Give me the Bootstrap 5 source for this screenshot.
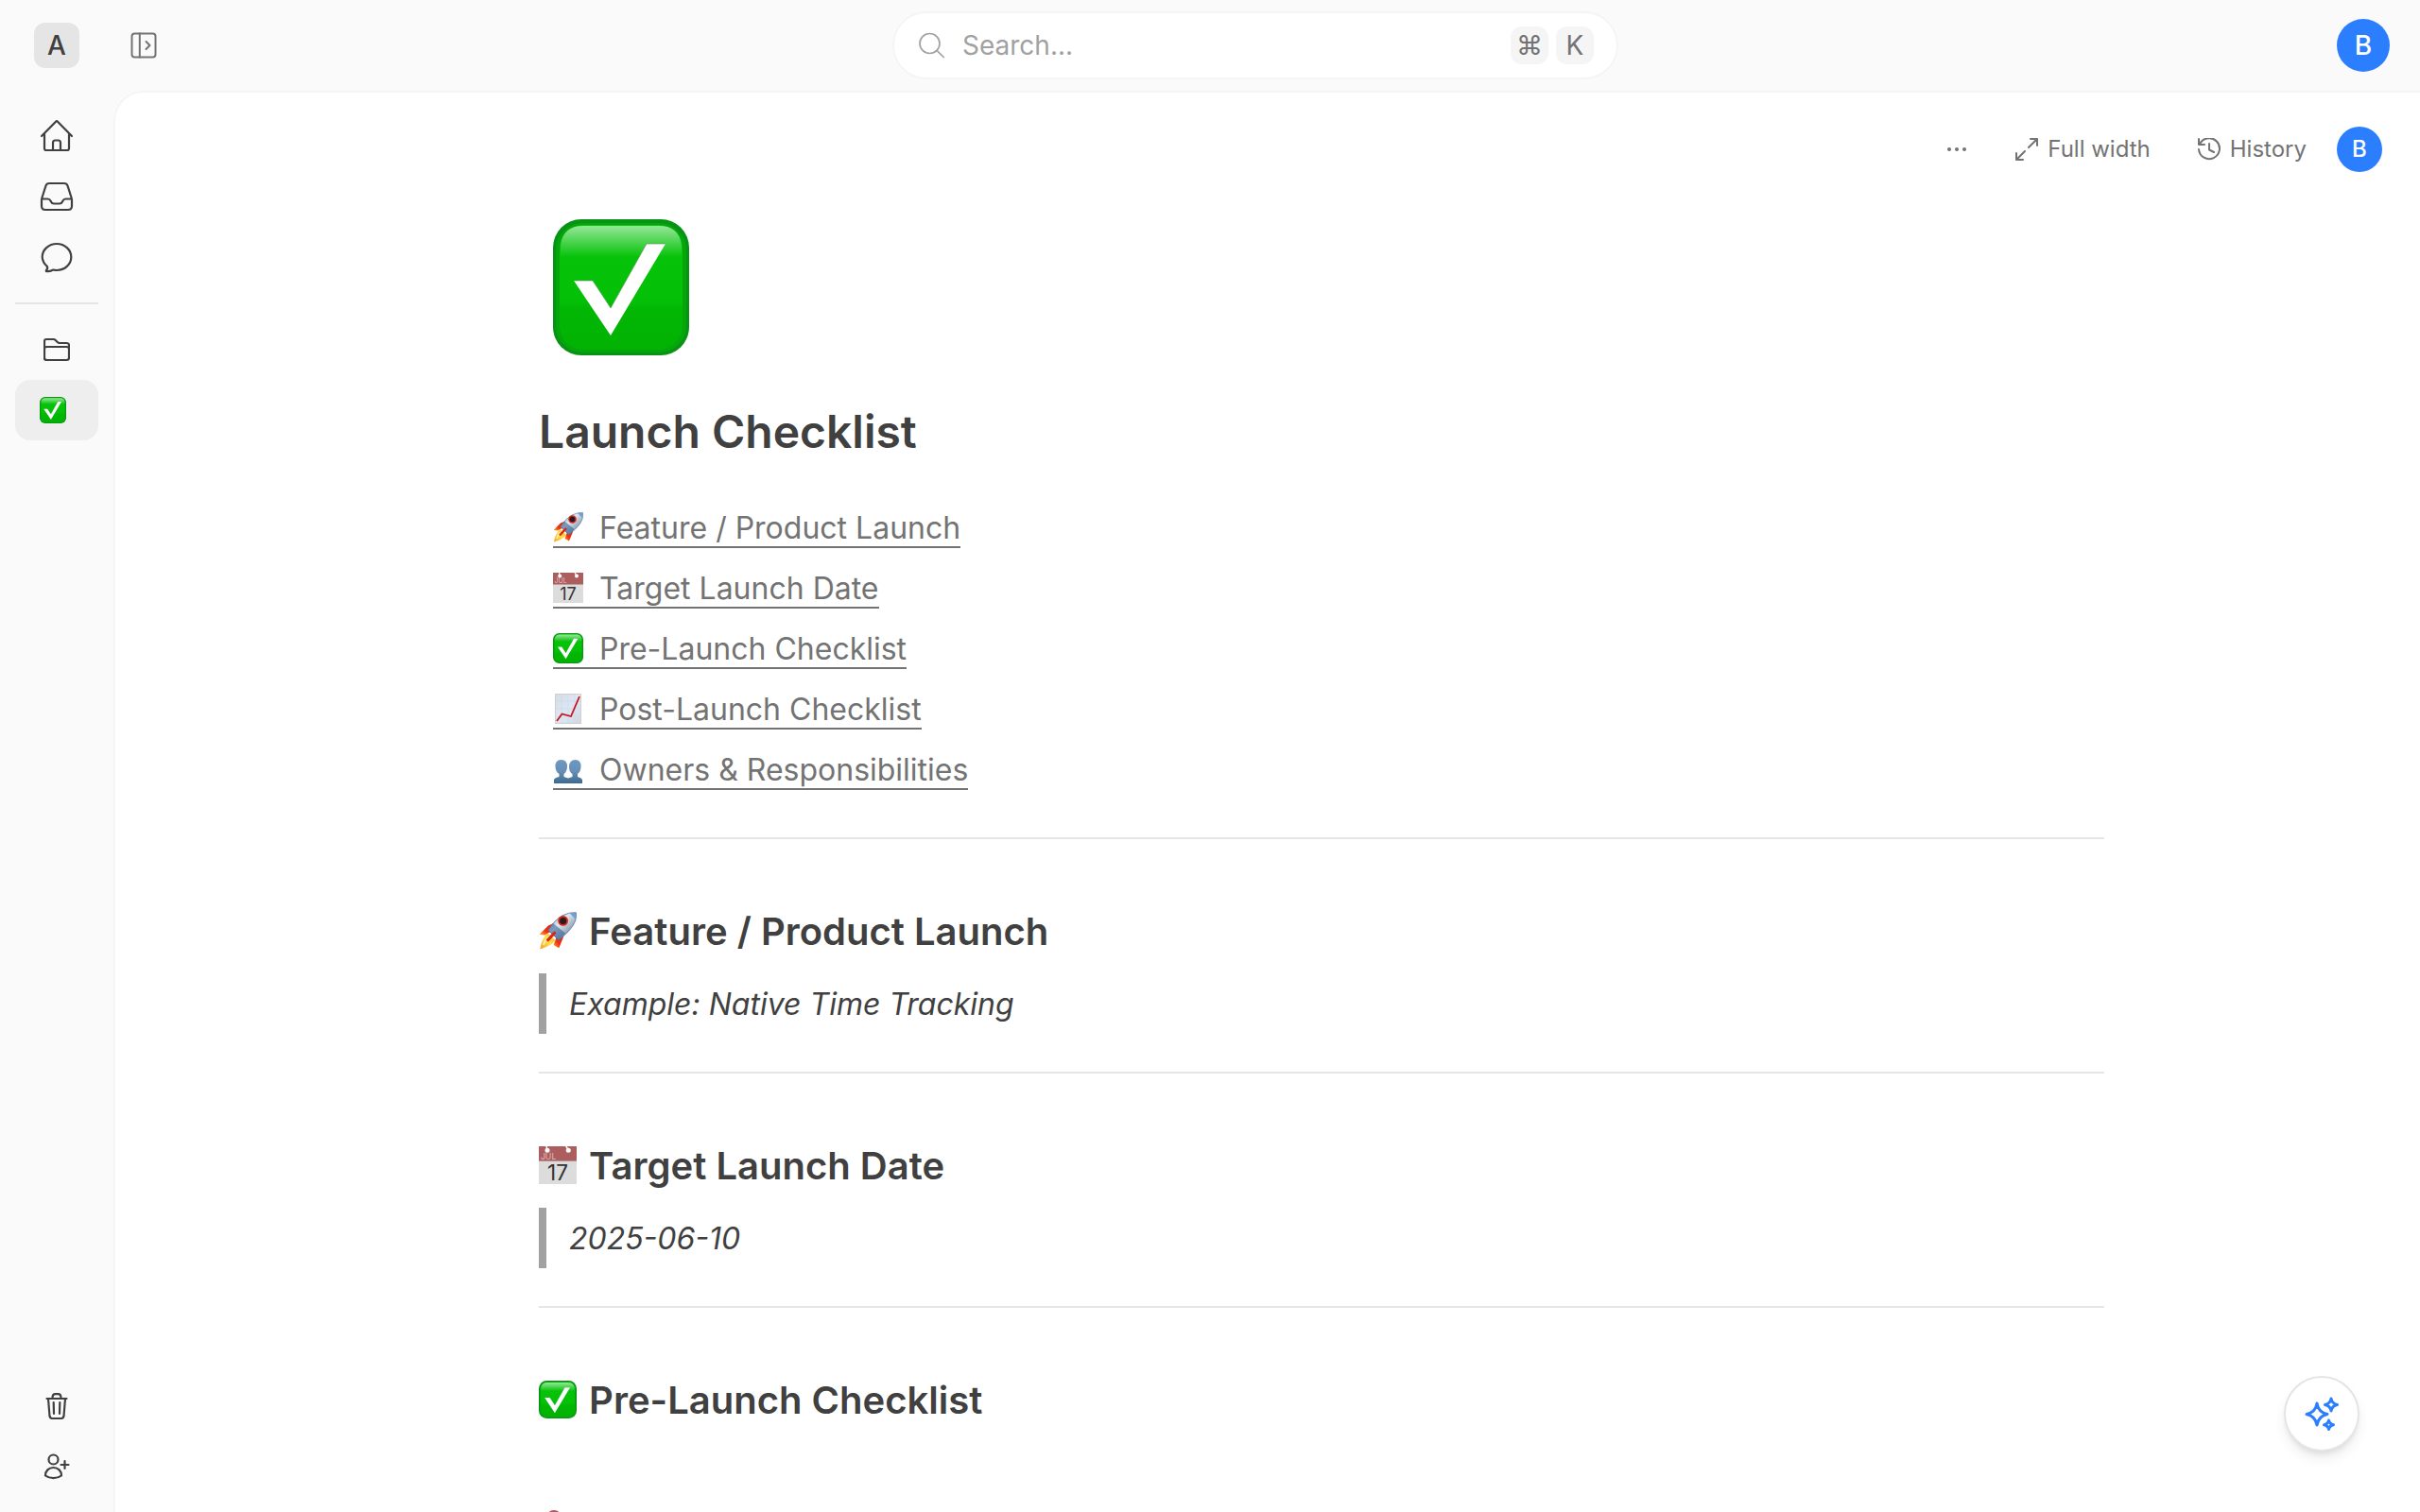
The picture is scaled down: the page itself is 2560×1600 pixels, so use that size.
<!DOCTYPE html>
<html lang="en">
<head>
<meta charset="utf-8">
<meta name="viewport" content="width=device-width, initial-scale=1">
<title>Launch Checklist</title>
<link href="https://cdn.jsdelivr.net/npm/bootstrap@5.3.0/dist/css/bootstrap.min.css" rel="stylesheet">
<style>
  body { font-family: Inter, "Liberation Sans", sans-serif; font-size: 28px; background: #fafafa; color: #404040; }
  svg { display: block; flex: none; }
  .ico { fill: none; stroke: currentColor; stroke-width: 2; stroke-linecap: round; stroke-linejoin: round; }
  .plain { border: 0; background: none; padding: 0; color: inherit; text-decoration: none; }
  .muted { color: #737373; }
  .topbar { height: 96px; }
  .side { flex: 1 1 0; }
  .rail { width: 120px; }
  .rail .ico { stroke-width: 2.2; }
  .workspace { width: 48px; height: 48px; border-radius: 12px; background: #e5e5e5; font-weight: 500; line-height: 32px; }
  .topbar-inner { padding: 0 32px 0 8px; }
  .toggle { width: 48px; height: 48px; }
  .search { width: 768px; height: 72px; border: 2px solid #f5f5f5; border-radius: 36px; background: #fff; padding: 0 24px 0 26px; }
  .search .ico { stroke: #a1a1a1; stroke-width: 1.7; }
  .search input { border: 0; outline: 0; background: none; min-width: 0; color: #404040; padding: 0; margin-left: 18px; }
  .search input::placeholder { color: #a1a1a1; opacity: 1; }
  .key { width: 40px; height: 40px; border-radius: 12px; background: #f5f5f5; font: inherit; line-height: 40px; padding: 0; text-align: center; color: #737373; }
  .user { width: 56px; height: 56px; background: #2b7fff; color: #fff; font-weight: 500; }
  .user-small { width: 48px; height: 48px; font-size: 24px; }
  .rail-item { height: 64px; border-radius: 16px; width: 100%; color: #404040; }
  .rail-item.current { background: #eee; padding-right: 8px; }
  .rail-line { height: 2px; background: #e5e5e5; margin: 16px 0; }
  .page { border: solid #f5f5f5; border-width: 2px 0 0 2px; border-radius: 32px 0 0 0; background: #fff; overflow-y: auto; scrollbar-width: none; }
  .tools { padding: 36px 40px 0; gap: 50px; font-size: 24px; line-height: 32px; }
  .tools-end { gap: 32px; }
  .tool { gap: 10px; }
  .doc { max-width: 1770px; padding-left: 114px; margin: 50px auto 0; }
  .indent { padding-left: 15px; }
  .doc h1 { font-size: 48px; line-height: 60px; font-weight: 600; margin: 51px 0 39px; }
  .toc { font-size: 32px; line-height: 38px; }
  .toc li { padding: 14px 0 10px; }
  .toc a { gap: 17px; color: #737373; text-decoration: none; border-bottom: 2px solid #737373; }
  .toc svg { margin-top: 2px; }
  .rule { border: 0; height: 2px; background: #e5e5e5; opacity: 1; margin: 40px 0 74px; }
  .doc h2 { font-size: 40px; line-height: 48px; font-weight: 600; margin: 0; }
  .doc h2 svg { display: inline-block; vertical-align: -5px; margin-right: 3px; }
  .cal text { font-weight: 400; }
  .quote { border-left: 8px solid #a1a1a1; margin: 20px 0 0; padding: 13px 0 11px 24px; font-size: 32px; line-height: 40px; font-style: italic; }
  .pinrow { margin-top: 92px; }
  .assist { right: 64px; bottom: 64px; width: 80px; height: 80px; border: 2px solid #e5e5e5; background: #fff; color: #2b7fff; box-shadow: 0 8px 16px -4px rgba(0,0,0,.12), 0 4px 8px -4px rgba(0,0,0,.12); }
  .assist .ico { stroke-width: 3; }
</style>
<script src="https://cdn.jsdelivr.net/npm/bootstrap@5.3.0/dist/js/bootstrap.bundle.min.js"></script>
</head>
<body class="vh-100 d-flex flex-column overflow-hidden">

<svg width="0" height="0" class="position-absolute" aria-hidden="true">
  <defs>
    <linearGradient id="gBody" x1="0" y1="0" x2="0" y2="1"><stop offset="0" stop-color="#06c40a"/><stop offset=".6" stop-color="#04c108"/><stop offset=".68" stop-color="#02b604"/><stop offset="1" stop-color="#02b202"/></linearGradient>
    <linearGradient id="gShine" x1="0" y1="0" x2="0" y2="1"><stop offset="0" stop-color="#fff" stop-opacity=".58"/><stop offset="1" stop-color="#fff" stop-opacity="0"/></linearGradient>
    <linearGradient id="gHull" x1="0" y1="0" x2="1" y2="1"><stop offset="0" stop-color="#6b87a8"/><stop offset=".4" stop-color="#e4e8ec"/><stop offset=".65" stop-color="#9fb0c2"/><stop offset="1" stop-color="#245c9c"/></linearGradient>
    <linearGradient id="gPeople" x1="0" y1="0" x2="0" y2="1"><stop offset="0" stop-color="#6f98c0"/><stop offset=".5" stop-color="#658fb6"/><stop offset="1" stop-color="#40698f"/></linearGradient>
    <linearGradient id="gSheet" x1="0" y1="0" x2="1" y2="1"><stop offset="0" stop-color="#d6dde3"/><stop offset=".5" stop-color="#dde7f4"/><stop offset="1" stop-color="#d3d8df"/></linearGradient>
    <linearGradient id="gFlame" x1="1" y1="0" x2="0" y2="1"><stop offset="0" stop-color="#ffb52b"/><stop offset=".5" stop-color="#ffdf4a"/><stop offset="1" stop-color="#f39a28"/></linearGradient>
    <linearGradient id="gFin" x1="1" y1="0" x2="0" y2="1"><stop offset="0" stop-color="#d9180b"/><stop offset=".65" stop-color="#f4310f"/><stop offset="1" stop-color="#ffb12e"/></linearGradient>
  </defs>
  <symbol id="check" viewBox="0 0 144 144">
    <rect width="144" height="144" rx="30" fill="#079314"/>
    <rect x="3" y="4" width="138" height="137" rx="28" fill="#05a60b"/>
    <rect x="7" y="6" width="130" height="132" rx="25" fill="url(#gBody)"/>
    <path d="M8 40V28Q10 7 32 7H112Q134 7 136 28V40Z" fill="url(#gShine)"/>
    <path d="M22 65H42L61 94 99 26H119L61 123Z" fill="#fff"/>
    <path d="M22 65H42L61 94 99 26H119" fill="none" stroke="#5f8f60" stroke-opacity=".6"/>
  </symbol>
  <symbol id="rocket" viewBox="0 0 32 32">
    <path d="M14 9 8 11.500 0.500 19 5 19.500 11 16Z" fill="url(#gFin)"/>
    <path d="M22 17 20.500 22 17 30.500 12.500 28 15 21Z" fill="url(#gFin)"/>
    <path d="M7.500 18 14 24Q11 28.500 1 31.500 2.500 22 7.500 18Z" fill="url(#gFlame)"/>
    <path d="M4 28Q5 23.500 9 21" fill="none" stroke="#fff3a8" stroke-width="1.500"/>
    <path d="M31.500.500Q33 8 25 16.500L17 24 8 15.500Q13 7 20 3 26 0 31.500.500Z" fill="url(#gHull)" stroke="#54708f" stroke-width=".6"/>
    <path d="M12 9.500 22.500 18 17 24 8 16Z" fill="#265a94" opacity=".55"/>
    <path d="M26 1Q31 0 31.500 1 32 3 31 6Z" fill="#6f9fd6"/>
    <path d="M14 17 7 24.500" stroke="#e02410" stroke-width="2.500"/>
    <circle cx="20.500" cy="7.500" r="4.300" fill="#d5251c"/><circle cx="20.500" cy="7.500" r="2.800" fill="#261b20"/>
  </symbol>
  <symbol id="calendar" viewBox="0 0 32 32">
    <rect width="32" height="32" fill="#dcdcdc"/>
    <rect width="32" height="12.500" fill="#ac5d5d"/>
    <path d="M6.500 0 7 3M23 0 25 3" stroke="#fff" stroke-width="1.200"/>
    <circle cx="7.200" cy="3.400" r="2" fill="#fff"/><circle cx="25" cy="3.400" r="2" fill="#fff"/>
  </symbol>
  <symbol id="chart" viewBox="0 0 32 32">
    <rect x="2.500" y=".500" width="27" height="31" fill="url(#gSheet)" stroke="#cfcfcf"/>
    <path d="M9 1V31M16 1V31M23 1V31M3 8H29M3 16H29M3 24H29" stroke="#cbd9ec" stroke-width=".6"/>
    <path d="M4 29 9.500 21.500 19 24 28 3" fill="none" stroke="#c4151c" stroke-width="1.800"/>
  </symbol>
  <symbol id="people" viewBox="0 0 32 32">
    <path d="M1 31V27Q2 25 6.500 24V21Q3 19 2.500 14 2 6 8.500 6 15.500 6 15 14 14.500 19 11.500 21V24L16 25.500 20.500 24V21Q17 19 17 14 17 6 23.500 6 30 6 29.500 14 29 19 26 21V24Q30 25 31 27V31Z" fill="url(#gPeople)"/>
  </symbol>
</svg>

<header class="topbar d-flex align-items-center flex-shrink-0">
  <div class="rail d-flex justify-content-center flex-shrink-0">
    <button class="plain workspace" type="button">A</button>
  </div>
  <div class="topbar-inner d-flex align-items-center flex-grow-1">
    <div class="side d-flex">
      <button class="plain toggle muted d-flex align-items-center justify-content-center" type="button" aria-label="Expand sidebar">
        <svg class="ico" width="28" height="28" viewBox="0 0 28 28"><rect x="1.500" y="1.500" width="25" height="25" rx="3"/><path d="M9.800 1.500V26.500M16.500 10 20.500 14 16.500 18"/></svg>
      </button>
    </div>
    <form class="search d-flex align-items-center" role="search">
      <svg class="ico" width="28" height="28" viewBox="0 0 28 28"><circle cx="11.500" cy="12" r="10.500"/><path d="M19.200 19.700 26.300 26.500"/></svg>
      <input class="flex-grow-1" type="search" placeholder="Search..." aria-label="Search">
      <span class="d-flex gap-2"><kbd class="key">⌘</kbd><kbd class="key">K</kbd></span>
    </form>
    <div class="side d-flex justify-content-end">
      <button class="plain user text-white rounded-circle" type="button">B</button>
    </div>
  </div>
</header>

<div class="d-flex flex-grow-1 overflow-hidden">
  <nav class="rail d-flex flex-column flex-shrink-0 p-3">
    <a class="rail-item d-flex align-items-center justify-content-center" href="#" aria-label="Home">
      <svg class="ico" width="36" height="36" viewBox="0 0 36 36"><path d="M2 18 17 2.700Q18 1.700 19 2.700L34 18M5 15V31Q5 33 7 33H29Q31 33 31 31V15M14 33V25Q14 22.500 16.500 22.500H19.500Q22 22.500 22 25V33"/></svg>
    </a>
    <a class="rail-item d-flex align-items-center justify-content-center" href="#" aria-label="Inbox">
      <svg class="ico" width="36" height="36" viewBox="0 0 36 36"><path d="M2 22Q2 20.500 2.500 19L6.500 6.500Q7.400 4 10 4H26Q28.600 4 29.500 6.500L33.500 19Q34 20.500 34 22V28Q34 32 30 32H6Q2 32 2 28ZM2.500 20.500H8.500Q10.500 20.500 11.500 22.500L12 23.500Q13 25.500 15 25.500H21Q23 25.500 24 23.500L24.500 22.500Q25.500 20.500 27.500 20.500H33.500"/></svg>
    </a>
    <a class="rail-item d-flex align-items-center justify-content-center" href="#" aria-label="Chat">
      <svg class="ico" width="36" height="36" viewBox="0 0 36 36"><path d="M18 4C26.500 4 33.300 10.200 33.300 18S26.500 32 18 32Q16.300 32 14.300 31.500 11 33.300 7.500 33.200 6.200 32.900 7.200 31.700 9 29.500 7.500 27.500 3 23.500 2.700 18C2.700 10.200 9.500 4 18 4Z"/></svg>
    </a>
    <div class="rail-line"></div>
    <a class="rail-item d-flex align-items-center justify-content-center" href="#" aria-label="Folder">
      <svg class="ico" width="28" height="28" viewBox="0 0 28 28"><path d="M1 24V5Q1 3 3 3H10.500Q11.700 3 12.500 3.800L15 6.300Q15.700 7 16.800 7H24.500Q27 7 27 9.500V22.500Q27 25 24.500 25H3.500Q1 25 1 22.500M1 13.500Q1 11 3.500 11H24.500Q27 11 27 13.500"/></svg>
    </a>
    <a class="rail-item current d-flex align-items-center justify-content-center" href="#" aria-label="Launch Checklist" aria-current="page">
      <svg width="28" height="28"><use href="#check"/></svg>
    </a>
    <div class="mt-auto">
      <a class="rail-item d-flex align-items-center justify-content-center" href="#" aria-label="Trash">
        <svg class="ico" width="28" height="28" viewBox="0 0 28 28"><path d="M3.500 6H24.500M5 6 6.500 24.500Q6.800 27 9.500 27H18.500Q21.200 27 21.500 24.500L23 6M9.500 5.500Q9.500 1.200 12.500 1.200H15.500Q18.500 1.200 18.500 5.500M10.700 10 11 22M17.300 10 17 22"/></svg>
      </a>
      <a class="rail-item d-flex align-items-center justify-content-center" href="#" aria-label="Invite people">
        <svg class="ico" width="28" height="28" viewBox="0 0 28 28"><circle cx="10.500" cy="6.500" r="5"/><path d="M2 23.500C2 18.500 5.500 15 10.500 15S19 18.500 19 23.500Q15.500 26.200 10.500 26.200T2 23.500ZM18.500 12H26.500M22.500 8V16"/></svg>
      </a>
    </div>
  </nav>

  <main class="page flex-grow-1">
    <div class="tools muted d-flex align-items-center justify-content-end">
      <button class="plain" type="button" aria-label="More"><svg width="24" height="24" viewBox="0 0 24 24" fill="#737373"><circle cx="4" cy="12" r="2"/><circle cx="12" cy="12" r="2"/><circle cx="20" cy="12" r="2"/></svg></button>
      <button class="plain tool d-flex align-items-center" type="button"><svg class="ico" width="24" height="24" viewBox="0 0 24 24"><path d="M14 10 23 1M16 1H23V8M10 14 1 23M1 16V23H8"/></svg>Full width</button>
      <div class="tools-end d-flex align-items-center">
        <button class="plain tool d-flex align-items-center" type="button"><svg class="ico" width="24" height="24" viewBox="0 0 24 24"><path d="M1 1V7H7M1.800 7A11 11 0 1 1 1 12M12 6V12.500L17 15"/></svg>History</button>
        <button class="plain user user-small text-white rounded-circle" type="button">B</button>
      </div>
    </div>

    <article class="doc">
      <div class="indent"><svg width="144" height="144" role="img" aria-label="Check mark"><use href="#check"/></svg></div>
      <h1>Launch Checklist</h1>
      <ul class="toc indent list-unstyled m-0">
        <li class="d-flex"><a class="d-flex" href="#feature"><svg width="32" height="32"><use href="#rocket"/></svg>Feature / Product Launch</a></li>
        <li class="d-flex"><a class="d-flex" href="#date"><svg class="cal" width="32" height="32" viewBox="0 0 32 32"><use href="#calendar"/><text x="1.500" y="11" font-size="7" fill="#e3bcbc">JUL</text><text x="16" y="28.500" font-size="18" text-anchor="middle" fill="#333">17</text></svg>Target Launch Date</a></li>
        <li class="d-flex"><a class="d-flex" href="#pre"><svg width="32" height="32"><use href="#check"/></svg>Pre-Launch Checklist</a></li>
        <li class="d-flex"><a class="d-flex" href="#post"><svg width="32" height="32"><use href="#chart"/></svg>Post-Launch Checklist</a></li>
        <li class="d-flex"><a class="d-flex" href="#owners"><svg width="32" height="32"><use href="#people"/></svg>Owners &amp; Responsibilities</a></li>
      </ul>
      <hr class="rule">
      <h2 id="feature"><svg width="40" height="40"><use href="#rocket"/></svg> Feature / Product Launch</h2>
      <blockquote class="quote">Example: Native Time Tracking</blockquote>
      <hr class="rule">
      <h2 id="date"><svg class="cal" width="40" height="40" viewBox="0 0 32 32"><use href="#calendar"/><text x="1.500" y="11" font-size="7" fill="#e3bcbc">JUL</text><text x="16" y="28.500" font-size="18" text-anchor="middle" fill="#333">17</text></svg> Target Launch Date</h2>
      <blockquote class="quote">2025-06-10</blockquote>
      <hr class="rule">
      <h2 id="pre"><svg width="40" height="40"><use href="#check"/></svg> Pre-Launch Checklist</h2>
      <div class="pinrow"><svg width="32" height="32" viewBox="0 0 32 32"><path d="M16 16V31" stroke="#999" stroke-width="2"/><circle cx="16" cy="8" r="8" fill="#b0565c"/></svg></div>
    </article>
  </main>
</div>

<button class="plain assist position-fixed rounded-circle d-flex align-items-center justify-content-center" type="button" aria-label="Assistant">
  <svg class="ico" width="40" height="40" viewBox="0 0 40 40"><path d="M15 9Q16.500 18.500 26 20.500 16.500 22.500 15 32 13.500 22.500 4 20.500 13.500 18.500 15 9ZM30 4Q31 9.500 36.500 10.500 31 11.500 30 17 29 11.500 23.500 10.500 29 9.500 30 4ZM27.500 27Q28.300 31 32.500 31.700 28.300 32.500 27.500 36.500 26.700 32.500 22.500 31.700 26.700 31 27.500 27Z"/></svg>
</button>
</body>
</html>
